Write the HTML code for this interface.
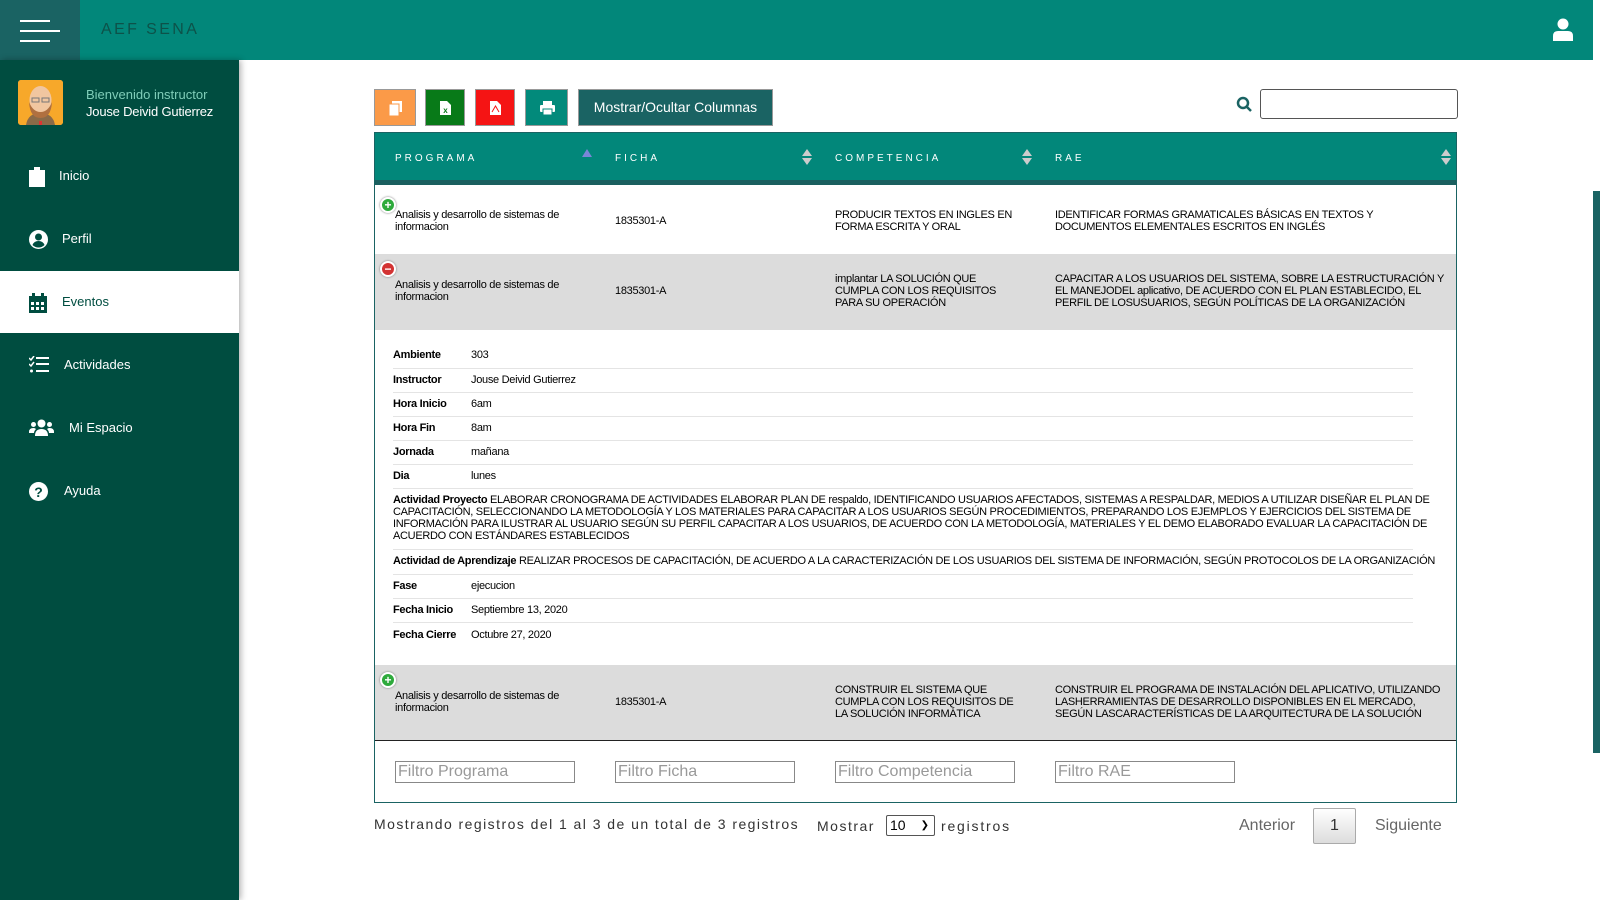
<!DOCTYPE html>
<html><head><meta charset="utf-8"><style>
*{box-sizing:border-box;margin:0;padding:0}
body{width:1600px;height:900px;overflow:hidden;background:#fff;font-family:"Liberation Sans",Arial,sans-serif;position:relative}
.top{position:absolute;left:0;top:0;width:1593px;height:60px;background:#02877a}
.ham{position:absolute;left:0;top:0;width:80px;height:60px;background:#1a6363}
.ham i{position:absolute;left:20px;height:2px;background:#fff}
.title{position:absolute;left:101px;top:21px;font-size:16px;letter-spacing:2.4px;color:#0d5249}
.side{position:absolute;left:0;top:60px;width:239px;height:840px;background:#004d40;box-shadow:2px 0 6px rgba(0,0,0,.3)}
.av{position:absolute;left:18px;top:20px;width:45px;height:45px;border-radius:3px;background:#f7a82a;overflow:hidden}
.w1{position:absolute;left:86px;top:27px;font-size:13px;color:#7fcdb8}
.w2{position:absolute;left:86px;top:44px;font-size:13px;color:#fff;letter-spacing:-0.2px}
.mi{position:absolute;left:0;width:239px;height:62px;color:#fff;font-size:13px}
.mi svg{position:absolute;left:29px;top:22px}
.mi span{position:absolute;left:62px;top:23px}
.mi.on{background:#fff;color:#004d40}
.btn{position:absolute;top:89px;height:37px;border:1px solid #999}
.tbl{position:absolute;left:374px;top:132px;width:1083px;height:671px;border:1px solid #1a6363}
.th{position:absolute;left:0;top:0;width:100%;height:52px;background:#02877a;border-bottom:5px solid #1a5f5f}
.th span{position:absolute;top:20px;font-size:10px;letter-spacing:3px;color:#fff}
.row{position:absolute;left:0;width:100%;font-size:11px;color:#000;letter-spacing:-0.3px}
.row div{position:absolute;line-height:12px;white-space:nowrap}
.pl{position:absolute;left:5px;width:16px;height:16px;border-radius:50%;border:2px solid #fff;box-shadow:0 0 2px #777;color:#fff;font-size:12px;font-weight:bold;text-align:center;line-height:12px;letter-spacing:0}
.det{position:absolute;left:18px;width:1020px;font-size:11px;border-bottom:1px solid #e4e4e4;letter-spacing:-0.3px;white-space:nowrap}
.det b{position:absolute;left:0}
.det span{position:absolute;left:78px}
.fi{position:absolute;top:20px;width:180px;height:22px;border:1px solid #888;font-size:16px;color:#999;padding-left:2px;line-height:20px;letter-spacing:0}
</style></head><body>
<div class="top">
<div class="ham"><i style="left:20px;top:20px;width:30px"></i><i style="top:30px;width:40px"></i><i style="top:40px;width:30px"></i></div>
<div class="title">AEF SENA</div>
<svg style="position:absolute;left:1553px;top:18px" width="20" height="23" viewBox="0 0 20 23"><circle cx="10" cy="6" r="5.5" fill="#fff"/><path d="M0 23V18Q0 13 5 13H15Q20 13 20 18V23Z" fill="#fff"/></svg>
</div>
<div class="side">
<div class="av"><svg width="45" height="45" viewBox="0 0 45 45"><rect width="45" height="45" fill="#f7a82a"/><path d="M8 45Q10 33 22 33Q35 33 37 45Z" fill="#8a6a48"/><ellipse cx="22.5" cy="20" rx="11" ry="14" fill="#f1c6a0"/><path d="M11 22Q12 38 22.5 38Q33 38 34 22Q30 32 22.5 32Q15 32 11 22Z" fill="#b07040"/><rect x="14" y="18" width="7" height="4" fill="none" stroke="#777"/><rect x="24" y="18" width="7" height="4" fill="none" stroke="#777"/><path d="M21 41h3v4h-3z" fill="#d33"/></svg></div>
<div class="w1">Bienvenido instructor</div>
<div class="w2">Jouse Deivid Gutierrez</div>
<div class="mi" style="top:85px"><svg width="16" height="20" viewBox="0 0 16 20"><rect x="0" y="3" width="16" height="17" fill="#fff"/><rect x="5" y="0" width="6" height="5" fill="#fff"/></svg><span style="left:59px">Inicio</span></div>
<div class="mi" style="top:148px"><svg width="19" height="19" viewBox="0 0 19 19"><circle cx="9.5" cy="9.5" r="9.5" fill="#fff"/><circle cx="9.5" cy="7" r="3.5" fill="#004d40"/><path d="M3.5 15Q5 11 9.5 11Q14 11 15.5 15Q13 17.5 9.5 17.5Q6 17.5 3.5 15Z" fill="#004d40"/></svg><span>Perfil</span></div>
<div class="mi on" style="top:211px"><svg width="18" height="20" viewBox="0 0 18 20"><rect x="0" y="3" width="18" height="17" fill="#004d40"/><rect x="3" y="0" width="3" height="5" fill="#004d40"/><rect x="12" y="0" width="3" height="5" fill="#004d40"/><g fill="#fff"><rect x="2" y="9" width="3" height="3"/><rect x="7" y="9" width="3" height="3"/><rect x="12" y="9" width="3" height="3"/><rect x="2" y="14" width="3" height="3"/><rect x="7" y="14" width="3" height="3"/><rect x="12" y="14" width="3" height="3"/></g></svg><span>Eventos</span></div>
<div class="mi" style="top:274px"><svg width="20" height="17" viewBox="0 0 20 17"><path d="M0 2l2 2 3-4M0 8l2 2 3-4" stroke="#fff" fill="none" stroke-width="1.5"/><circle cx="2.5" cy="15" r="1.5" fill="#fff"/><rect x="7" y="1" width="13" height="2" fill="#fff"/><rect x="7" y="7" width="13" height="2" fill="#fff"/><rect x="7" y="14" width="13" height="2" fill="#fff"/></svg><span style="left:64px">Actividades</span></div>
<div class="mi" style="top:337px"><svg width="25" height="17" viewBox="0 0 25 17"><g fill="#fff"><circle cx="12.5" cy="4.5" r="4"/><path d="M6 17Q6 10 12.5 10Q19 10 19 17Z"/><circle cx="4.5" cy="5.5" r="2.5"/><circle cx="20.5" cy="5.5" r="2.5"/><path d="M0 13Q0 9 4.5 9Q6 9 7 10Q5 12 5 14H0Z"/><path d="M25 13Q25 9 20.5 9Q19 9 18 10Q20 12 20 14H25Z"/></g></svg><span style="left:69px">Mi Espacio</span></div>
<div class="mi" style="top:400px"><svg width="19" height="19" viewBox="0 0 19 19"><circle cx="9.5" cy="9.5" r="9.5" fill="#fff"/><text x="9.5" y="15" font-size="14" font-weight="bold" text-anchor="middle" fill="#004d40" font-family="Liberation Sans">?</text></svg><span style="left:64px">Ayuda</span></div>
</div>

<div class="btn" style="left:374px;width:42px;background:#fb9a48"><svg style="position:absolute;left:14px;top:11px" width="13" height="15" viewBox="0 0 13 15"><rect x="3" y="0" width="10" height="11" fill="#fff"/><rect x="0" y="3" width="10" height="12" fill="#fff" stroke="#fb9a48"/></svg></div>
<div class="btn" style="left:425px;width:40px;background:#087a18"><svg style="position:absolute;left:14px;top:11px" width="11" height="14" viewBox="0 0 11 14"><path d="M0 0H7L11 4V14H0Z" fill="#fff"/><text x="5.5" y="12" font-size="8" font-weight="bold" text-anchor="middle" fill="#087a18" font-family="Liberation Sans">x</text></svg></div>
<div class="btn" style="left:475px;width:40px;background:#f51414"><svg style="position:absolute;left:14px;top:11px" width="11" height="14" viewBox="0 0 11 14"><path d="M0 0H7L11 4V14H0Z" fill="#fff"/><path d="M2 11L5.5 5L9 11" stroke="#f51414" fill="none"/></svg></div>
<div class="btn" style="left:525px;width:43px;background:#028a7b"><svg style="position:absolute;left:14px;top:11px" width="15" height="14" viewBox="0 0 15 14"><rect x="3" y="0" width="9" height="4" fill="#fff"/><rect x="0" y="4" width="15" height="7" rx="1" fill="#fff"/><rect x="3" y="8" width="9" height="6" fill="#fff" stroke="#028a7b"/></svg></div>
<div class="btn" style="left:578px;width:195px;background:#1a6363;color:#fff;font-size:14px;text-align:center;line-height:35px">Mostrar/Ocultar Columnas</div>
<svg style="position:absolute;left:1236px;top:96px" width="17" height="16" viewBox="0 0 17 16"><circle cx="7" cy="7" r="5" fill="none" stroke="#1a6363" stroke-width="2.5"/><path d="M10.5 10.5L15 15" stroke="#1a6363" stroke-width="2.5"/></svg>
<div style="position:absolute;left:1260px;top:89px;width:198px;height:30px;border:1px solid #555;border-radius:3px"></div>

<div class="tbl">
<div class="th">
<span style="left:20px">PROGRAMA</span><span style="left:240px">FICHA</span><span style="left:460px">COMPETENCIA</span><span style="left:680px">RAE</span>
<svg style="position:absolute;left:207px;top:16px" width="10" height="8"><path d="M0 8L5 0L10 8Z" fill="#7a86d8"/></svg>
<svg style="position:absolute;left:427px;top:16px" width="10" height="16"><path d="M0 7L5 0L10 7ZM0 9L5 16L10 9Z" fill="#ccc"/></svg>
<svg style="position:absolute;left:647px;top:16px" width="10" height="16"><path d="M0 7L5 0L10 7ZM0 9L5 16L10 9Z" fill="#ccc"/></svg>
<svg style="position:absolute;left:1066px;top:16px" width="10" height="16"><path d="M0 7L5 0L10 7ZM0 9L5 16L10 9Z" fill="#ccc"/></svg>
</div>
<div class="row" style="top:57px;height:64px;background:#fff">
<div class="pl" style="top:7px;background:#2eaa3c">+</div>
<div style="left:20px;top:19px">Analisis y desarrollo de sistemas de<br>informacion</div>
<div style="left:240px;top:25px">1835301-A</div>
<div style="left:460px;top:19px">PRODUCIR TEXTOS EN INGLES EN<br>FORMA ESCRITA Y ORAL</div>
<div style="left:680px;top:19px">IDENTIFICAR FORMAS GRAMATICALES BÁSICAS EN TEXTOS Y<br>DOCUMENTOS ELEMENTALES ESCRITOS EN INGLÉS</div>
</div>
<div class="row" style="top:121px;height:76px;background:#dcdcdc">
<div class="pl" style="top:7px;background:#d33333">−</div>
<div style="left:20px;top:25px">Analisis y desarrollo de sistemas de<br>informacion</div>
<div style="left:240px;top:31px">1835301-A</div>
<div style="left:460px;top:19px">implantar LA SOLUCIÓN QUE<br>CUMPLA CON LOS REQUISITOS<br>PARA SU OPERACIÓN</div>
<div style="left:680px;top:19px">CAPACITAR A LOS USUARIOS DEL SISTEMA, SOBRE LA ESTRUCTURACIÓN Y<br>EL MANEJODEL aplicativo, DE ACUERDO CON EL PLAN ESTABLECIDO, EL<br>PERFIL DE LOSUSUARIOS, SEGÚN POLÍTICAS DE LA ORGANIZACIÓN</div>
</div>
<div class="det" style="top:211px;height:25px;padding-top:5px"><b>Ambiente</b><span>303</span></div>
<div class="det" style="top:236px;height:24px;padding-top:5px"><b>Instructor</b><span>Jouse Deivid Gutierrez</span></div>
<div class="det" style="top:260px;height:24px;padding-top:5px"><b>Hora Inicio</b><span>6am</span></div>
<div class="det" style="top:284px;height:24px;padding-top:5px"><b>Hora Fin</b><span>8am</span></div>
<div class="det" style="top:308px;height:24px;padding-top:5px"><b>Jornada</b><span>mañana</span></div>
<div class="det" style="top:332px;height:24px;padding-top:5px"><b>Dia</b><span>lunes</span></div>
<div class="det" style="top:356px;height:61px;padding-top:5px;line-height:12px"><b style="position:static">Actividad Proyecto</b> ELABORAR CRONOGRAMA DE ACTIVIDADES ELABORAR PLAN DE respaldo, IDENTIFICANDO USUARIOS AFECTADOS, SISTEMAS A RESPALDAR, MEDIOS A UTILIZAR DISEÑAR EL PLAN DE<br>CAPACITACIÓN, SELECCIONANDO LA METODOLOGÍA Y LOS MATERIALES PARA CAPACITAR A LOS USUARIOS SEGÚN PROCEDIMIENTOS, PREPARANDO LOS EJEMPLOS Y EJERCICIOS DEL SISTEMA DE<br>INFORMACIÓN PARA ILUSTRAR AL USUARIO SEGÚN SU PERFIL CAPACITAR A LOS USUARIOS, DE ACUERDO CON LA METODOLOGÍA, MATERIALES Y EL DEMO ELABORADO EVALUAR LA CAPACITACIÓN DE<br>ACUERDO CON ESTÁNDARES ESTABLECIDOS</div>
<div class="det" style="top:417px;height:25px;padding-top:5px"><b style="position:static">Actividad de Aprendizaje</b> REALIZAR PROCESOS DE CAPACITACIÓN, DE ACUERDO A LA CARACTERIZACIÓN DE LOS USUARIOS DEL SISTEMA DE INFORMACIÓN, SEGÚN PROTOCOLOS DE LA ORGANIZACIÓN</div>
<div class="det" style="top:442px;height:24px;padding-top:5px"><b>Fase</b><span>ejecucion</span></div>
<div class="det" style="top:466px;height:24px;padding-top:5px"><b>Fecha Inicio</b><span>Septiembre 13, 2020</span></div>
<div class="det" style="top:490px;height:24px;padding-top:6px;border:none"><b>Fecha Cierre</b><span>Octubre 27, 2020</span></div>
<div class="row" style="top:532px;height:76px;background:#dcdcdc;border-bottom:1px solid #222">
<div class="pl" style="top:7px;background:#2eaa3c">+</div>
<div style="left:20px;top:25px">Analisis y desarrollo de sistemas de<br>informacion</div>
<div style="left:240px;top:31px">1835301-A</div>
<div style="left:460px;top:19px">CONSTRUIR EL SISTEMA QUE<br>CUMPLA CON LOS REQUISITOS DE<br>LA SOLUCIÓN INFORMÁTICA</div>
<div style="left:680px;top:19px">CONSTRUIR EL PROGRAMA DE INSTALACIÓN DEL APLICATIVO, UTILIZANDO<br>LASHERRAMIENTAS DE DESARROLLO DISPONIBLES EN EL MERCADO,<br>SEGÚN LASCARACTERÍSTICAS DE LA ARQUITECTURA DE LA SOLUCIÓN</div>
</div>
<div class="row" style="top:608px;height:62px;letter-spacing:0">
<div class="fi" style="left:20px;line-height:20px">Filtro Programa</div>
<div class="fi" style="left:240px;line-height:20px">Filtro Ficha</div>
<div class="fi" style="left:460px;line-height:20px">Filtro Competencia</div>
<div class="fi" style="left:680px;line-height:20px">Filtro RAE</div>
</div>
</div>

<div style="position:absolute;left:374px;top:816px;font-size:14px;letter-spacing:1.45px;color:#333">Mostrando registros del 1 al 3 de un total de 3 registros</div>
<div style="position:absolute;left:817px;top:818px;font-size:14px;letter-spacing:1.5px;color:#333">Mostrar</div>
<div style="position:absolute;left:886px;top:815px;width:49px;height:21px;border:1px solid #555;border-radius:2px;font-size:14px;padding-left:3px;line-height:19px">10 <span style="position:absolute;right:5px;font-size:10px">&#10095;</span></div>
<div style="position:absolute;left:941px;top:818px;font-size:14px;letter-spacing:1.8px;color:#333">registros</div>
<div style="position:absolute;left:1239px;top:817px;font-size:16px;color:#666">Anterior</div>
<div style="position:absolute;left:1313px;top:808px;width:43px;height:36px;border:1px solid #aaa;border-radius:2px;background:linear-gradient(#fff,#ddd);font-size:16px;text-align:center;line-height:34px;color:#333">1</div>
<div style="position:absolute;left:1375px;top:817px;font-size:16px;color:#666">Siguiente</div>
<div style="position:absolute;left:1593px;top:191px;width:7px;height:562px;background:#1a6363"></div>
</body></html>
